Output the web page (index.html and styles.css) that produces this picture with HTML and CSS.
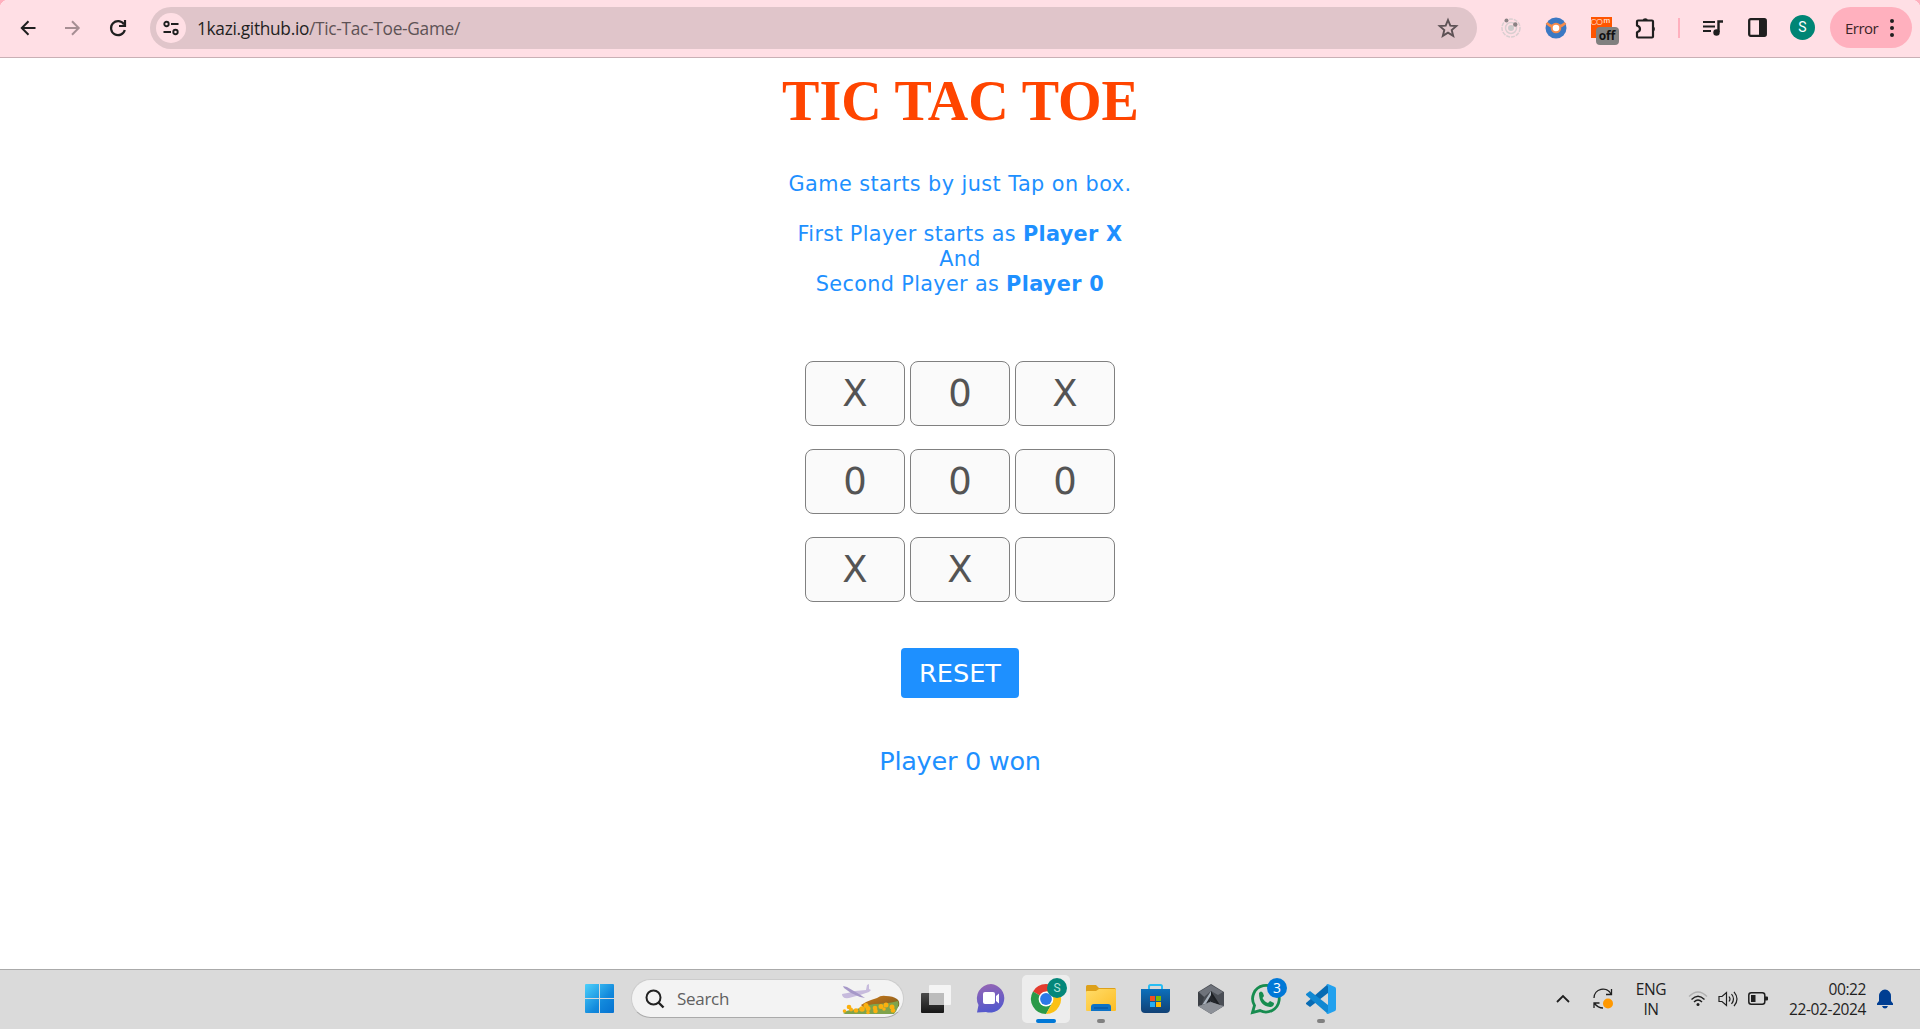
FILE: index.html
```html
<!DOCTYPE html>
<html lang="en">
<head>
<meta charset="utf-8">
<title>Tic Tac Toe</title>
<link rel="stylesheet" href="styles.css">
</head>
<body>
<header class="toolbar">
  <div class="slot"><svg width="16" height="16" viewBox="0 0 16 16"><path d="M15.500 8H1.500M8.500 1.300L1.800 8l6.700 6.700" fill="none" stroke="#1f1f1f" stroke-width="2"/></svg></div>
  <div class="slot"><svg width="16" height="16" viewBox="0 0 16 16"><path d="M0 8h14M7 1.300L13.700 8 7 14.700" fill="none" stroke="#a68e93" stroke-width="2"/></svg></div>
  <div class="slot"><svg width="18" height="18" viewBox="0 0 18 18"><path d="M15 5.500A7 7 0 1 0 15.800 11" fill="none" stroke="#1f1f1f" stroke-width="2.200"/><path d="M16 1v6h-6" fill="none" stroke="#1f1f1f" stroke-width="2.200"/></svg></div>
  <div class="omnibox">
    <span class="site-info"><svg width="16" height="14" viewBox="0 0 16 14" fill="none" stroke="#1f1f1f" stroke-width="1.900"><circle cx="3.500" cy="3" r="2.200"/><path d="M8 3H15.500M.5 11h7.500"/><circle cx="12.500" cy="11" r="2.200"/></svg></span>
    <span class="url"><span class="host">1kazi.github.io</span>/Tic-Tac-Toe-Game/</span>
    <svg class="star" width="20" height="20" viewBox="0 0 20 20"><path d="M10 2l2.300 5.600 6 .5-4.600 3.900 1.500 5.900L10 14.700l-5.200 3.200 1.500-5.900L1.700 8.100l6-.5z" fill="none" stroke="#5d5255" stroke-width="1.900"/></svg>
  </div>
  <div class="extensions">
    <div class="slot"><svg width="22" height="22" viewBox="0 0 22 22"><circle cx="11" cy="11" r="9" fill="none" stroke="#d9cfd1" stroke-width="1.500" stroke-dasharray="4 1"/><circle cx="11" cy="11" r="5.500" fill="none" stroke="#d9cfd1" stroke-width="1.500"/><circle cx="11" cy="11" r="3" fill="#ccc"/><circle cx="6.500" cy="3.500" r="2" fill="#8a8284"/><circle cx="15.300" cy="7.500" r="2.200" fill="#8a8284"/></svg></div>
    <div class="slot"><svg width="22" height="22" viewBox="0 0 22 22"><circle cx="11" cy="11" r="10.500" fill="#3b78c3"/><path d="M1.500 6q3 3 7 3.500h5q4-.5 7-3.500" fill="none" stroke="#f58a4b" stroke-width="2.600"/><circle cx="11" cy="11" r="4.300" fill="#fff" stroke="#f58a4b" stroke-width="2"/></svg></div>
    <div class="slot"><span class="comet"><span class="comet-co">CO</span><span class="comet-m">m</span><span class="off">off</span></span></div>
    <div class="slot"><svg width="22" height="22" viewBox="0 0 22 22"><path d="M2 4.500q0-1 1-1h14q1 0 1 1v15q0 1-1 1H3q-1 0-1-1v-4.200q3-1 3-3.300T2 8.500z" fill="none" stroke="#1f1f1f" stroke-width="2.200" stroke-linejoin="round"/><path d="M7.500 3.500a2.800 2.800 0 0 1 5.500 0zM18 9a3.300 3.300 0 0 1 0 6z" fill="#1f1f1f"/></svg></div>
    <div class="divider"></div>
    <div class="slot"><svg width="21" height="18" viewBox="0 0 21 18"><path d="M1 3h12M1 7.500h12M1 12h8" stroke="#1f1f1f" stroke-width="2"/><path d="M16.500 13V2.500H21" fill="none" stroke="#1f1f1f" stroke-width="2.400"/><circle cx="14.500" cy="13.500" r="3.200" fill="#1f1f1f"/></svg></div>
    <div class="slot"><svg width="19" height="19" viewBox="0 0 19 19"><rect x="1.200" y="1.200" width="16.600" height="16.600" rx="1.500" fill="none" stroke="#1f1f1f" stroke-width="2.300"/><path d="M11 1h7v17h-7z" fill="#1f1f1f"/></svg></div>
    <div class="slot"><span class="avatar">S</span></div>
  </div>
  <div class="error"><span class="error-label">Error</span><svg width="4" height="18" viewBox="0 0 4 18" fill="#1f1f1f"><circle cx="2" cy="2" r="2"/><circle cx="2" cy="9" r="2"/><circle cx="2" cy="16" r="2"/></svg></div>
</header>

<main class="game">
  <h1 class="title">TIC TAC TOE</h1>
  <p class="intro intro-first">Game starts by just Tap on box.</p>
  <p class="intro">First Player starts as <b>Player X</b><br>And<br>Second Player as <b>Player 0</b></p>
  <div class="board">
    <div class="cell">X</div><div class="cell">0</div><div class="cell">X</div>
    <div class="cell">0</div><div class="cell">0</div><div class="cell">0</div>
    <div class="cell">X</div><div class="cell">X</div><div class="cell"></div>
  </div>
  <button class="reset">RESET</button>
  <p class="result">Player 0 won</p>
</main>

<footer class="taskbar">
  <div class="apps">
    <div class="app"><svg width="29" height="29" viewBox="0 0 29 29"><defs><linearGradient id="win" gradientUnits="userSpaceOnUse" x1="0" y1="0" x2="29" y2="29"><stop offset="0" stop-color="#4cd0fb"/><stop offset=".6" stop-color="#1289dc"/><stop offset="1" stop-color="#0672d0"/></linearGradient></defs><path d="M1 0h13v14H0V1q0-1 1-1zM15 0h13q1 0 1 1v13H15zM0 15h14v14H1q-1 0-1-1zM15 15h14v13q0 1-1 1H15z" fill="url(#win)"/></svg></div>
    <div class="search">
      <svg width="20" height="20" viewBox="0 0 20 20" fill="none" stroke="#222"><circle cx="8.500" cy="8.500" r="7" stroke-width="2"/><path d="M13.500 13.500l5 5" stroke-width="2.400"/></svg>
      <span class="search-label">Search</span>
      <svg class="scene" width="58" height="32" viewBox="0 0 58 32"><defs><linearGradient id="hill" x1="0" y1="0" x2="1" y2="1"><stop offset="0" stop-color="#cc7d18"/><stop offset=".5" stop-color="#a4681c"/><stop offset="1" stop-color="#5d6426"/></linearGradient></defs><path d="M19 22q4-3 10-5l6-2q4-3 9-2 7 0 11 3 3 2 2 7l-4 4H24z" fill="url(#hill)"/><path d="M1 30q3-3 14-4 8-4 17-5 14 0 24-3 2 6-4 13H3z" fill="#7fa34c"/><g fill="#fbb00f"><circle cx="7" cy="24" r="2.300"/><circle cx="2.500" cy="28" r="1.800"/><circle cx="9" cy="26.500" r="2"/><circle cx="14" cy="27.500" r="2.300"/><circle cx="20" cy="26" r="2.800"/><circle cx="24" cy="22.500" r="2.500"/><circle cx="26" cy="25.500" r="2.500"/><circle cx="33" cy="25" r="2.300"/><circle cx="26" cy="29.500" r="1.800"/><circle cx="33.500" cy="28" r="2.300"/><circle cx="39" cy="23.500" r="2.500"/><circle cx="44" cy="22" r="2.500"/><circle cx="42" cy="26" r="1.800"/><circle cx="50" cy="24" r="2.500"/><circle cx="51" cy="27.500" r="2.300"/></g><path d="M0 11q7-1 13-3l11-1 1-5 2-1v5l2 1-2 2-9 3-11 3q-7 1-7-4z" fill="#c7bbdd"/><path d="M1 3l4 1 12 7 6 4-5-1-9-4-7-5z" fill="#a698c8"/></svg>
    </div>
    <div class="app first-app"><svg width="30" height="28" viewBox="0 0 30 28"><defs><linearGradient id="tv" x1="0" y1="0" x2="0" y2="1"><stop offset="0" stop-color="#4b4b4b"/><stop offset="1" stop-color="#161616"/></linearGradient></defs><rect y="8" width="23" height="20" rx="1" fill="url(#tv)"/><rect x="8" width="22" height="20" rx="1" fill="#f4f4f4"/><path d="M8 8h15v12H8z" fill="#bcbcbc"/></svg></div>
    <div class="app"><svg width="30" height="29" viewBox="0 0 30 29"><defs><linearGradient id="ch" x1=".3" y1="0" x2=".5" y2="1"><stop offset="0" stop-color="#9465b4"/><stop offset="1" stop-color="#5158ce"/></linearGradient></defs><path d="M15 0a14.300 14.300 0 1 1-5 28L1 28.500 2.500 21A14.300 14.300 0 0 1 15 0z" fill="url(#ch)"/><rect x="7" y="8" width="12" height="12" rx="2" fill="#fff"/><path d="M20 12l3-2.500v10L20 17z" fill="#fff"/></svg></div>
    <div class="app active"><svg width="30" height="30" viewBox="0 0 30 30"><path d="M15 15L2 7.500A15 15 0 0 1 28 7.500H15z" fill="#e33b2e"/><path d="M15 15L2 7.500A15 15 0 0 0 15 30l6.500-11.500z" fill="#2a9a48"/><path d="M15 15l6.500 3.500L15 30A15 15 0 0 0 28 7.500H15z" fill="#fbc116"/><circle cx="15" cy="15" r="7.400" fill="#fff"/><circle cx="15" cy="15" r="5.900" fill="#2c79e6"/></svg><span class="badge profile">S</span><span class="running current"></span></div>
    <div class="app"><svg width="30" height="27" viewBox="0 0 30 27"><defs><linearGradient id="fo" x1="0" y1="0" x2="1" y2="1"><stop offset="0" stop-color="#ffdc69"/><stop offset="1" stop-color="#fdbd26"/></linearGradient></defs><path d="M0 9V1.500Q0 0 1.500 0H10l3 3h15.500Q30 3 30 5v5z" fill="#dda01a"/><path d="M0 7q0-1 1-1h9l3-2h16q1 0 1 1v20q0 1-1 1H1q-1 0-1-1z" fill="url(#fo)"/><path d="M5 26v-4q0-3 3-3h14q3 0 3 3v4z" fill="#0d72c6"/><path d="M8 23h14" stroke="#084b91"/></svg><span class="running"></span></div>
    <div class="app"><svg width="29" height="30" viewBox="0 0 29 30"><defs><linearGradient id="st" x1="0" y1="0" x2="0" y2="1"><stop offset="0" stop-color="#0c70bc"/><stop offset="1" stop-color="#114175"/></linearGradient></defs><path d="M8 7V2.500Q8 1 9.500 1h10Q21 1 21 2.500V7" fill="none" stroke="#28bdf3" stroke-width="2"/><path d="M0 5h29v20q0 4-4 4H4q-4 0-4-4z" fill="url(#st)"/><path d="M9 12h5v5H9z" fill="#f25022"/><path d="M15 12h5v5h-5z" fill="#7fba00"/><path d="M9 18h5v5H9z" fill="#24aef2"/><path d="M15 18h5v5h-5z" fill="#ffb900"/></svg></div>
    <div class="app"><svg width="28" height="30" viewBox="0 0 28 30"><path d="M14 0l13 8v14l-13 8-13-8V8z" fill="#4a4e55"/><path d="M14 1l12 7-5 3-7-4-7 6-5-5z" fill="#6f737b"/><path d="M1 8l6 5-2 8-4 1z" fill="#3b3f45"/><path d="M14 7l9 14-9-3-9 3z" fill="#1d2024"/><path d="M14 7l-9 14 9-3z" fill="#a9b2bc"/><path d="M14 11l6 8.500-6-2-5 2z" fill="#24272c"/><path d="M5 21l9-3 9 3 4 1-13 8-13-8z" fill="#8d9198"/></svg></div>
    <div class="app"><svg width="30" height="30" viewBox="0 0 30 30"><path d="M1.500 28.500l2-7A13.300 13.300 0 1 1 9 26.600z" fill="none" stroke="#178c4f" stroke-width="2.800"/><path d="M8 9q2-3 4 0l1 3-1.500 2q2 4 5.500 5l2-2 4 2q0 4-4 4Q8 22 8 9z" fill="#178c4f"/></svg><span class="badge count">3</span></div>
    <div class="app"><svg width="30" height="30" viewBox="0 0 30 30"><path d="M22 0v9L4 23l-4-3v-1z" fill="#086bb3"/><path d="M0 10l4-3 18 14v9L0 11z" fill="#1188d2"/><path d="M22 0l7 3q1 .5 1 2v20q0 1.500-1 2l-7 3-2-1q2 0 2-2V3q0-2-2-2z" fill="#22a1ee"/></svg><span class="running"></span></div>
  </div>
  <div class="tray">
    <svg class="chevron" width="14" height="8" viewBox="0 0 14 8"><path d="M1 7l6-6 6 6" fill="none" stroke="#1f1f1f" stroke-width="1.800"/></svg>
    <svg class="sync" width="20" height="21" viewBox="0 0 20 21"><path d="M1 10a9 9 0 0 1 17-4M18.500 1v5.500H13M1 20v-5h5.500M1.500 15.500Q5 20 10 20" fill="none" stroke="#1f1f1f" stroke-width="1.300"/><circle cx="15" cy="15.500" r="5" fill="#ff9800"/></svg>
    <div class="lang">ENG<br>IN</div>
    <svg class="wifi" width="20" height="16" viewBox="0 0 20 16" fill="none" stroke="#1f1f1f" stroke-width="1.400"><path d="M1 5.500q9-9 18 0" stroke="#b0b0b0"/><path d="M3.500 8.500q6.500-6.500 13 0M6 11q4-4 8 0"/><circle cx="10" cy="13.500" r="1.500" fill="#1f1f1f" stroke="none"/></svg>
    <svg class="volume" width="20" height="16" viewBox="0 0 20 16" fill="none" stroke="#1f1f1f" stroke-width="1.200"><path d="M1 5.500h3L8.500 1.500v13L4 10.500H1zM11 5.500q2 2.500 0 5M13.500 3q4 5 0 10M16 .8q6 7.200 0 14.400"/></svg>
    <svg class="battery" width="20" height="13" viewBox="0 0 20 13"><rect x=".8" y=".8" width="16" height="11.400" rx="2.500" fill="none" stroke="#1f1f1f" stroke-width="1.500"/><path d="M3 3h4.500v7H3zM17 4.500h2q1 0 1 1v2q0 1-1 1h-2z" fill="#1f1f1f"/></svg>
    <div class="clock"><span class="time">00:22</span><br><span class="date">22-02-2024</span></div>
    <svg class="bell" width="16" height="20" viewBox="0 0 16 20"><path d="M2 7a6 6.500 0 0 1 12 0v5l2 2.500V16H0v-1.500L2 12zM5 17h6q-1 2.500-3 2.500T5 17z" fill="#003e92"/></svg>
  </div>
</footer>
</body>
</html>
```
FILE: styles.css
```css
* { box-sizing: border-box; }
body { margin: 0; height: 1029px; overflow: hidden; display: flex; flex-direction: column; background: #fff; font-family: "Open Sans", "Noto Sans", sans-serif; }
svg { display: block; flex: none; overflow: visible; }

.toolbar { flex: none; height: 58px; display: flex; padding: 0 8px 2px 5px; align-items: center; background: radial-gradient(circle at 8px 8px, transparent 8px, #ffb0be 8.500px) 0 0 / 8px 8px no-repeat, radial-gradient(circle at 0 8px, transparent 8px, #ffb0be 8.500px) 100% 0 / 8px 8px no-repeat, #ffdfe5; border-bottom: 1px solid #c9b0b5; }
.slot { width: 45px; height: 42px; flex: none; display: flex; align-items: center; justify-content: center; }
.omnibox { width: 1327px; height: 42px; margin-left: 10px; margin-top: 1px; border-radius: 21px; background: #e0c5ca; display: flex; align-items: center; padding: 0 19px 0 6px; }
.site-info { width: 30px; height: 30px; border-radius: 50%; background: #ffdfe5; display: flex; align-items: center; justify-content: center; }
.url { margin-left: 11px; flex: 1; font-size: 17.300px; letter-spacing: -.3px; color: #5d5255; white-space: nowrap; }
.host { color: #1f1f1f; }
.extensions { margin-left: 11px; display: flex; align-items: center; }
.divider { width: 2px; height: 20px; margin: 0 10px; background: #ffb0be; }
.comet { position: relative; width: 21px; height: 21px; margin-left: 1px; background: #ff5500; color: #ffc9ad; font: 11px/10px "Liberation Sans", sans-serif; white-space: nowrap; display: flex; letter-spacing: -1px; }
.comet-co { font-size: 9px; width: 13px; }
.comet-m { font-size: 8px; line-height: 7px; color: #fff; }
.off { position: absolute; left: 5px; top: 10px; width: 23px; height: 18px; border-radius: 4px; background: #80807f; color: #111; font: bold 12px/18px "Open Sans", sans-serif; letter-spacing: 0; text-align: center; }
.avatar { width: 25px; height: 25px; border-radius: 50%; background: #008575; color: #fff; font: 14px/25px Roboto, sans-serif; text-align: center; }
.error { margin-left: 5px; width: 82px; height: 41px; border-radius: 21px; background: #ffb0be; display: flex; align-items: center; padding-left: 15px; gap: 14px; font-size: 15px; color: #3b2529; flex: none; }
.error-label { width: 31px; letter-spacing: -.5px; }

.game { flex: 1; display: flex; flex-direction: column; align-items: center; color: #1e90ff; font-family: "DejaVu Sans", sans-serif; text-align: center; }
.title { margin: 11px 0 0; padding-left: 1px; font: bold 56px/64px "Liberation Serif", serif; color: #ff4500; }
.intro { margin: 0; font-size: 20.800px; line-height: 25px; letter-spacing: .33px; white-space: nowrap; }
.intro-first { margin: 39px 0 25px; letter-spacing: .43px; }
.board { margin-top: 64px; display: grid; grid-template-columns: repeat(3, 100px); grid-auto-rows: 65px; gap: 23px 5px; }
.cell { border: 1px solid #808080; border-radius: 8px; background: #fafafa; color: #545454; font-size: 37px; line-height: 63px; }
.reset { margin: 46px 0 0; width: 118px; height: 50px; border: 0; border-radius: 4px; background: #1e90ff; color: #fff; font: 25.600px "DejaVu Sans", sans-serif; padding: 0; }
.result { margin: 47px 0 0; font-size: 25.600px; line-height: 32px; letter-spacing: -.3px; }

.taskbar { flex: none; height: 60px; border-top: 1px solid #aaa; background: #dadada; display: flex; align-items: center; justify-content: space-between; padding: 0 27px 2px 572px; color: #1f1f1f; }
.apps { display: flex; align-items: center; }
.app { position: relative; width: 55px; height: 48px; display: flex; align-items: center; justify-content: center; }
.first-app { margin-left: 4px; }
.active { width: 48px; margin: 0 3px 0 4px; border-radius: 5px; background: #ededed; }
.search { width: 273px; height: 39px; margin-left: 4px; border-radius: 20px; background: #f3f3f3; border: 1px solid #ccc; border-bottom-color: #aaa; display: flex; align-items: center; padding: 0 3px 0 13px; }
.search-label { flex: 1; margin-left: 12px; font-size: 17px; color: #606060; letter-spacing: -.3px; }
.badge { position: absolute; width: 20px; height: 20px; border-radius: 50%; color: #fff; text-align: center; }
.profile { top: 3px; left: 25px; background: #04877a; font: 12px/20px Roboto, sans-serif; color: #b4e2dc; }
.count { top: 3px; left: 29px; background: #0078d7; font: 14px/20px "Open Sans", sans-serif; }
.running { position: absolute; bottom: 0; left: 50%; width: 8px; height: 4px; margin-left: -4px; border-radius: 2px; background: #808080; }
.current { width: 20px; margin-left: -10px; background: #0078d7; }
.tray { display: flex; align-items: center; font-size: 15.500px; line-height: 20px; letter-spacing: -.4px; }
.sync { margin-left: 23px; }
.lang { width: 34px; margin-left: 21px; text-align: center; white-space: nowrap; }
.wifi { margin-left: 20px; }
.volume, .battery { margin-left: 10px; }
.clock { width: 84px; margin-left: 14px; text-align: right; white-space: nowrap; }
.bell { margin-left: 11px; }
```
